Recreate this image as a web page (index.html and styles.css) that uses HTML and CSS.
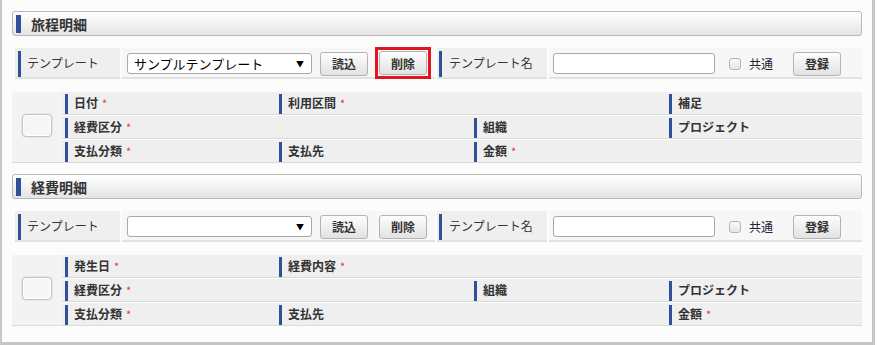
FILE: index.html
```html
<!DOCTYPE html>
<html lang="ja">
<head>
    <meta charset="UTF-8">
    <title>旅程明細</title>
    <link rel="stylesheet" href="styles.css">
</head>
<body>
    <div class="frame">
        <div class="section-head"><span class="head-bar"></span>旅程明細</div>
        <div class="tpl-row">
            <div class="tpl-label">テンプレート</div>
            <div class="tpl-value">
                <div class="select"><span>サンプルテンプレート</span><span class="arrow">▼</span></div>
                <button class="btn btn-load">読込</button>
                <span class="marked"><button class="btn">削除</button></span>
            </div>
            <div class="tpl-label tpl-name">テンプレート名</div>
            <div class="tpl-value">
                <input type="text" class="name-input">
                <span class="check"></span>
                <span class="check-text">共通</span>
                <button class="btn btn-save">登録</button>
            </div>
        </div>
        <div class="detail">
            <div class="detail-check"><span class="box"></span></div>
            <div class="detail-rows">
                <div class="detail-row">
                    <div class="cell">日付<i>*</i></div>
                    <div class="cell span2">利用区間<i>*</i></div>
                    <div class="cell">補足</div>
                </div>
                <div class="detail-row">
                    <div class="cell span2">経費区分<i>*</i></div>
                    <div class="cell">組織</div>
                    <div class="cell">プロジェクト</div>
                </div>
                <div class="detail-row">
                    <div class="cell">支払分類<i>*</i></div>
                    <div class="cell">支払先</div>
                    <div class="cell span2">金額<i>*</i></div>
                </div>
            </div>
        </div>

        <div class="section-head"><span class="head-bar"></span>経費明細</div>
        <div class="tpl-row">
            <div class="tpl-label">テンプレート</div>
            <div class="tpl-value">
                <div class="select"><span></span><span class="arrow">▼</span></div>
                <button class="btn btn-load">読込</button>
                <button class="btn btn-del">削除</button>
            </div>
            <div class="tpl-label tpl-name">テンプレート名</div>
            <div class="tpl-value">
                <input type="text" class="name-input">
                <span class="check"></span>
                <span class="check-text">共通</span>
                <button class="btn btn-save">登録</button>
            </div>
        </div>
        <div class="detail">
            <div class="detail-check"><span class="box"></span></div>
            <div class="detail-rows">
                <div class="detail-row">
                    <div class="cell">発生日<i>*</i></div>
                    <div class="cell span3">経費内容<i>*</i></div>
                </div>
                <div class="detail-row">
                    <div class="cell span2">経費区分<i>*</i></div>
                    <div class="cell">組織</div>
                    <div class="cell">プロジェクト</div>
                </div>
                <div class="detail-row">
                    <div class="cell">支払分類<i>*</i></div>
                    <div class="cell span2">支払先</div>
                    <div class="cell">金額<i>*</i></div>
                </div>
            </div>
        </div>
    </div>
</body>
</html>
```

FILE: styles.css
```css
body {
    margin: 0;
    background: #fff;
    font-family: "Noto Sans CJK JP", "Noto Sans", sans-serif;
    color: #333;
}
.frame {
    box-sizing: border-box;
    width: 875px;
    height: 345px;
    background: #fcfcfc;
    border-left: 2px solid #c6c6c6;
    border-right: 3px solid #c6c6c6;
    border-bottom: 3px solid #c6c6c6;
    padding: 11px 10px 0 10px;
}
.section-head {
    box-sizing: border-box;
    height: 25px;
    display: flex;
    align-items: center;
    border: 1px solid #b9b9b9;
    border-radius: 3px;
    background: linear-gradient(#ffffff, #e4e4e4);
    font-size: 14px;
    font-weight: bold;
    line-height: 1;
}
.head-bar {
    width: 5px;
    height: 18px;
    background: #30509a;
    margin: 0 10px 0 3px;
}
.tpl-row {
    display: flex;
    gap: 2px;
    margin: 12px 0 0 3px;
    height: 31px;
}
.tpl-label {
    position: relative;
    box-sizing: border-box;
    width: 105px;
    background: #efefef;
    border-bottom: 2px solid #e2e2e2;
    padding-left: 12px;
    font-size: 12px;
    line-height: 29px;
}
.tpl-label::before {
    content: "";
    position: absolute;
    left: 3px;
    top: 3px;
    bottom: 0;
    width: 3px;
    background: #30509a;
}
.tpl-name {
    width: 110px;
}
.tpl-name::before {
    left: 2px;
}
.tpl-value {
    box-sizing: border-box;
    width: 313px;
    display: flex;
    align-items: center;
    padding: 2px 0 0 5px;
    background: #f7f7f7;
    border-bottom: 2px solid #e2e2e2;
}
.select {
    box-sizing: border-box;
    width: 185px;
    height: 21px;
    display: flex;
    align-items: center;
    justify-content: space-between;
    padding: 0 7px 0 6px;
    background: #fff;
    border: 1px solid #a9a9a9;
    border-radius: 3px;
    font-size: 13px;
    color: #000;
}
.arrow {
    font-size: 8px;
}
.btn {
    box-sizing: border-box;
    width: 48px;
    height: 24px;
    padding: 0;
    border: 1px solid #b3b3b3;
    border-radius: 3px;
    background: linear-gradient(#fdfdfd, #e2e2e2);
    font-family: inherit;
    font-size: 12px;
    font-weight: bold;
    color: #333;
}
.btn-load {
    margin-left: 8px;
}
.btn-del {
    margin-left: 11px;
}
.marked {
    display: flex;
    padding: 1px;
    margin: -1px -4px 0 7px;
    border: 3px solid #e3141f;
}
.name-input {
    box-sizing: border-box;
    width: 162px;
    height: 21px;
    margin: 0 0 0 -1px;
    border: 1px solid #a9a9a9;
    border-radius: 3px;
    background: #fff;
}
.check {
    box-sizing: border-box;
    width: 12px;
    height: 12px;
    margin-left: 14px;
    border: 1px solid #b5b5b5;
    border-radius: 3px;
    background: linear-gradient(#fafafa, #e6e6e6);
}
.check-text {
    margin-left: 8px;
    font-size: 12px;
    color: #223;
}
.btn-save {
    margin-left: 20px;
}
.detail {
    display: flex;
    margin-top: 13px;
    border-bottom: 1px solid #dadada;
}
.detail + .section-head {
    margin-top: 11px;
}
.detail-check {
    width: 50px;
    display: flex;
    align-items: center;
    justify-content: center;
    background: #f3f3f3;
}
.box {
    box-sizing: border-box;
    width: 30px;
    height: 23px;
    margin-top: -3px;
    border: 1px solid #c4c4c4;
    border-radius: 4px;
    background: #f6f6f6;
    box-shadow: inset 0 0 0 1px #fff, 0 0 0 1px #e6e6e6;
}
.detail-rows {
    flex: 1;
}
.detail-row {
    display: grid;
    grid-template-columns: 214px 195px 195px 196px;
    height: 22px;
    background: #efefef;
}
.detail-row + .detail-row {
    border-top: 1px solid #fff;
    box-shadow: 0 -1px 0 #d9d9d9;
    margin-top: 1px;
}
.cell {
    position: relative;
    padding-left: 12px;
    font-size: 12px;
    font-weight: bold;
    line-height: 22px;
}
.cell::before {
    content: "";
    position: absolute;
    left: 3px;
    top: 2px;
    bottom: 0;
    width: 3px;
    background: #30509a;
}
.span2 {
    grid-column: span 2;
}
.span3 {
    grid-column: span 3;
}
.cell i {
    font-style: normal;
    font-weight: normal;
    color: #e8322e;
    margin-left: 4px;
    font-size: 11px;
}
```
